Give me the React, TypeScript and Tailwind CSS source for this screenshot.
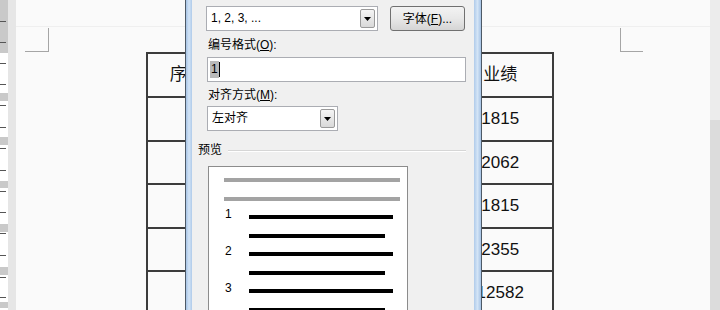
import React from "react";

const FONT = "font-['Liberation_Sans','Noto_Sans_CJK_SC',sans-serif]";

const rulerTicks = [21, 42, 63, 84, 105, 127, 148, 170, 191, 212, 233, 255, 277, 297];
const rulerBands = [
  [0, 53],
  [93, 8],
  [137, 8],
  [181, 7],
  [224, 8],
  [267, 8],
  [302, 6],
];

const rows = [
  { h: "h-[44px]", cells: ["序号", "姓名", "部门", "业绩"] },
  { h: "h-[44px]", cells: ["", "张三", "销售一部", "1815"] },
  { h: "h-[43px]", cells: ["", "李四", "销售二部", "2062"] },
  { h: "h-[44px]", cells: ["", "王五", "销售一部", "1815"] },
  { h: "h-[43px]", cells: ["", "赵六", "销售三部", "2355"] },
  { h: "h-[44px]", cells: ["", "合计", "", "12582"] },
];
const colW = ["w-[80px]", "w-[111px]", "w-[111px]", "w-[106px]"];

function Arrow() {
  return (
    <svg width="7" height="4" viewBox="0 0 7 4">
      <path d="M0 0H7L3.5 4Z" fill="#000" />
    </svg>
  );
}

function DropButton() {
  return (
    <div className="my-[2px] mr-[2px] flex w-[15px] items-center justify-center rounded-[2px] border border-[#9a9a9a] bg-linear-to-b from-[#f4f4f4] to-[#d9d9d9]">
      <Arrow />
    </div>
  );
}

function Ruler() {
  return (
    <div className="relative h-full w-[8px] shrink-0 bg-white">
      {rulerBands.map(([top, h], i) => (
        <div key={i} className="absolute left-0 w-[8px] bg-[#c9c9c9]" style={{ top, height: h }} />
      ))}
      {rulerTicks.map((t) => (
        <div key={t} className="absolute left-0 h-[1px] w-[6px] bg-[#555]" style={{ top: t }} />
      ))}
    </div>
  );
}

function PreviewLine({ num, long }: { num?: string; long: boolean }) {
  return (
    <div className="flex h-[18.5px] shrink-0 pl-[16px]">
      <div className="w-[24px] self-start text-[12px] leading-[12px] text-black">{num}</div>
      <div className={`h-[4px] self-center bg-black ${long ? "w-[144px]" : "w-[136px]"}`} />
    </div>
  );
}

function Dialog() {
  return (
    <div className={`absolute left-[185px] top-0 flex h-[310px] w-[297px] border-x border-[#4d5966] ${FONT}`}>
      <div className="w-[6px] bg-linear-to-r from-[#a6c3e5] via-[#d3e4f6] to-[#b0cbea]" />
      <div className="flex flex-1 flex-col overflow-hidden bg-[#f0f0f0] pl-[14px] pt-[6px] text-[12px] text-black">
        <div className="flex shrink-0">
          <div className="flex h-[25px] w-[172px] border border-[#abadb3] bg-white">
            <div className="flex-1 pl-[4px] leading-[23px]">1, 2, 3, ...</div>
            <DropButton />
          </div>
          <div className="ml-[12px] flex h-[25px] w-[75px] items-center justify-center rounded-[3px] border border-[#707070] bg-linear-to-b from-[#f3f3f3] via-[#e8e8e8] to-[#d5d5d5] leading-[14px]">
            字体(<span className="underline">F</span>)...
          </div>
        </div>
        <div className="mt-[7px] h-[14px] shrink-0 pl-[2px] leading-[14px]">
          编号格式(<span className="underline">O</span>):
        </div>
        <div className="ml-[1px] mt-[5px] flex h-[25px] w-[259px] shrink-0 items-center border border-[#abadb3] bg-white pl-[2px]">
          <span className="bg-[#b9b9b9] px-[1px] leading-[17px]">1</span>
          <span className="h-[15px] w-[1px] bg-black" />
        </div>
        <div className="mt-[6px] h-[14px] shrink-0 pl-[2px] leading-[14px]">
          对齐方式(<span className="underline">M</span>):
        </div>
        <div className="ml-[1px] mt-[4px] flex h-[25px] w-[131px] shrink-0 border border-[#abadb3] bg-white">
          <div className="flex-1 pl-[4px] leading-[23px]">左对齐</div>
          <DropButton />
        </div>
        <div className="-ml-[8px] mt-[12px] flex h-[14px] shrink-0 items-center">
          <span className="leading-[14px]">预览</span>
          <div className="ml-[6px] h-[1px] w-[238px] bg-[#d6d6d6] shadow-[0_1px_0_#fff]" />
        </div>
        <div className="ml-[2px] mt-[9px] flex h-[160px] w-[200px] shrink-0 flex-col border border-[#8c8c8c] bg-white pt-[4px]">
          <div className="flex h-[18.5px] shrink-0 items-center pl-[15px]">
            <div className="h-[4px] w-[176px] bg-[#a3a3a3]" />
          </div>
          <div className="flex h-[18.5px] shrink-0 items-center pl-[15px]">
            <div className="h-[4px] w-[176px] bg-[#a3a3a3]" />
          </div>
          <PreviewLine num="1" long />
          <PreviewLine long={false} />
          <PreviewLine num="2" long />
          <PreviewLine long={false} />
          <PreviewLine num="3" long />
          <PreviewLine long={false} />
        </div>
      </div>
      <div className="w-[7px] bg-linear-to-r from-[#b0cbea] via-[#d3e4f6] to-[#a6c3e5]" />
    </div>
  );
}

export default function App() {
  return (
    <div className="relative flex h-[310px] w-[720px] overflow-hidden bg-[#fafafa]">
      <Ruler />
      <div className="w-[8px] shrink-0 bg-[#e6e6e6]" />
      <div className="flex flex-1 flex-col overflow-hidden">
        <div className="h-[27px] shrink-0 border-b border-[#efefef]" />
        <div className="mt-[1px] flex shrink-0 pl-[9px]">
          <div className="h-[24px] w-[24px] border-b border-r border-[#a5a5a5]" />
          <div className="ml-[571px] h-[24px] w-[23px] border-b border-l border-[#a5a5a5]" />
        </div>
        <div className={`ml-[130px] w-[408px] shrink-0 border-l-2 border-t-2 border-[#3c3c3c] ${FONT} text-[17px] text-[#111]`}>
          {rows.map((r, i) => (
            <div key={i} className={`flex ${r.h}`}>
              {r.cells.map((c, j) => (
                <div
                  key={j}
                  className={`${colW[j]} flex items-center justify-center border-b-2 border-r-2 border-[#3c3c3c]`}
                >
                  {c}
                </div>
              ))}
            </div>
          ))}
        </div>
      </div>
      <div className="flex w-[10px] shrink-0 flex-col">
        <div className="h-[120px] bg-[#ececec]" />
        <div className="flex-1 bg-[#dcdcdc]" />
      </div>
      <Dialog />
    </div>
  );
}
